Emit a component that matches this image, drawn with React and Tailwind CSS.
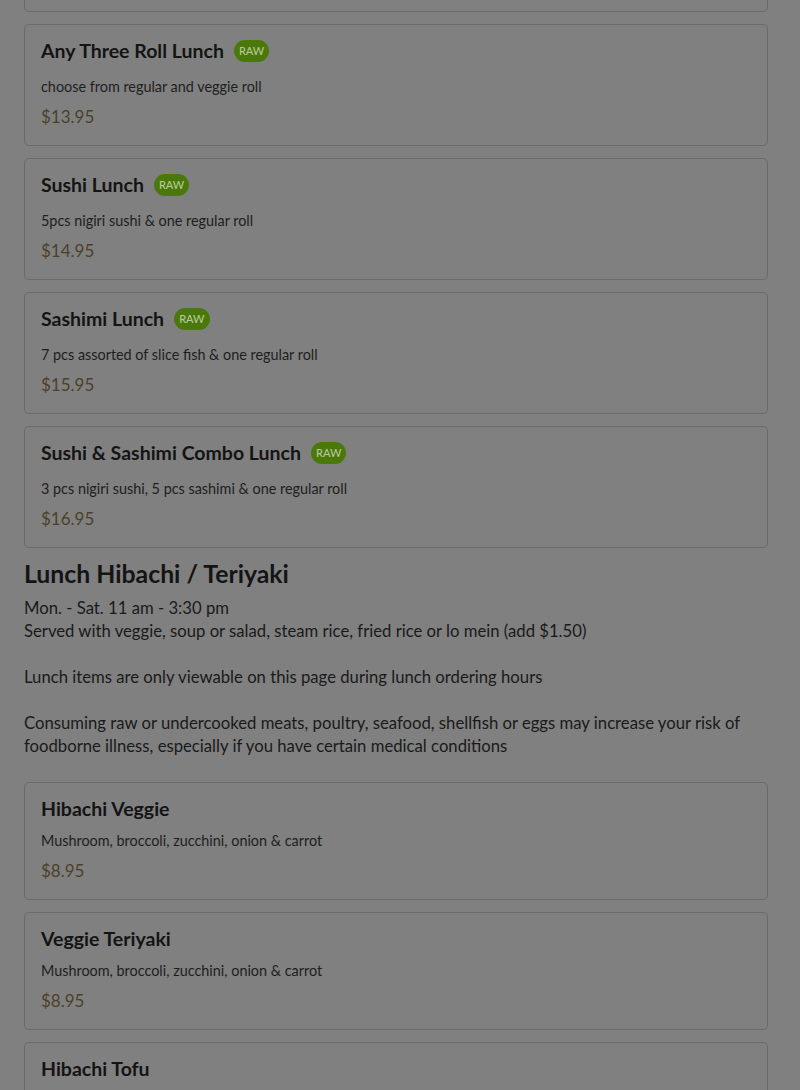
import React from 'react';

const items = [
  { name: 'Any Three Roll Lunch', raw: true, desc: 'choose from regular and veggie roll', price: '$13.95' },
  { name: 'Sushi Lunch', raw: true, desc: '5pcs nigiri sushi & one regular roll', price: '$14.95' },
  { name: 'Sashimi Lunch', raw: true, desc: '7 pcs assorted of slice fish & one regular roll', price: '$15.95' },
  { name: 'Sushi & Sashimi Combo Lunch', raw: true, desc: '3 pcs nigiri sushi, 5 pcs sashimi & one regular roll', price: '$16.95' },
];

const hibachi = [
  { name: 'Hibachi Veggie', desc: 'Mushroom, broccoli, zucchini, onion & carrot', price: '$8.95' },
  { name: 'Veggie Teriyaki', desc: 'Mushroom, broccoli, zucchini, onion & carrot', price: '$8.95' },
  { name: 'Hibachi Tofu', desc: 'Tofu, mushroom, broccoli, zucchini, onion & carrot', price: '$8.95' },
];

const MenuCard = ({ item }) => (
  <div className="rounded-[5px] border border-[#6a6a6a] px-4 pt-3 pb-4">
    <div className={`flex items-center gap-[10px] ${item.raw ? 'mb-3' : 'mb-2'}`}>
      <h3 className="text-[19.5px] leading-[28px] font-bold text-[#141414]">{item.name}</h3>
      {item.raw && (
        <span className="rounded-full bg-[#4b780a] px-[5px] h-[22px] flex items-center text-[11px] font-medium text-[#b4c898]">
          RAW
        </span>
      )}
    </div>
    <p className="text-[14.4px] leading-[20px] text-[#1e1e1e]">{item.desc}</p>
    <p className="mt-2 text-[17px] leading-[24px] text-[#4c4029]">{item.price}</p>
  </div>
);

export default function App() {
  return (
    <div
      className="min-h-screen bg-[#808080] pl-6 pr-8 overflow-hidden"
      style={{ fontFamily: 'Lato, "Noto Sans", sans-serif' }}
    >
      <div className="space-y-3">
        <div className="-mt-[110px] h-[122px] rounded-[5px] border border-[#6a6a6a]" />
        {items.map((item) => (
          <MenuCard key={item.name} item={item} />
        ))}
      </div>

      <h2 className="mt-[10px] text-[24.8px] leading-[32px] font-bold text-[#141414]">Lunch Hibachi / Teriyaki</h2>
      <div className="mt-[7px] text-[16.7px] leading-[23px] text-[#1a1a1a]">
        <p>Mon. - Sat. 11 am - 3:30 pm</p>
        <p>Served with veggie, soup or salad, steam rice, fried rice or lo mein (add $1.50)</p>
        <p className="mt-[23px]">Lunch items are only viewable on this page during lunch ordering hours</p>
        <p className="mt-[23px]">
          Consuming raw or undercooked meats, poultry, seafood, shellfish or eggs may increase your risk of
          <br />
          foodborne illness, especially if you have certain medical conditions
        </p>
      </div>

      <div className="mt-6 space-y-3 pb-6">
        {hibachi.map((item) => (
          <MenuCard key={item.name} item={item} />
        ))}
      </div>
    </div>
  );
}
